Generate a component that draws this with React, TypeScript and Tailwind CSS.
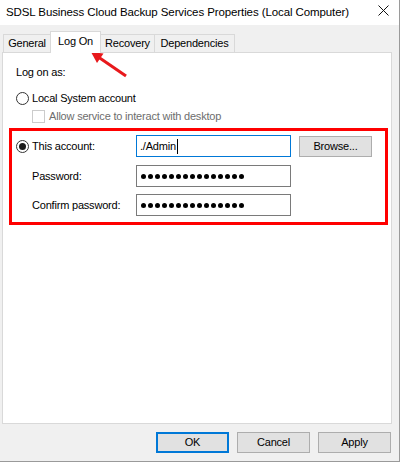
import React from 'react';

function Radio({ checked }: { checked?: boolean }) {
  return (
    <span className="flex h-[13px] w-[13px] shrink-0 items-center justify-center rounded-full border border-[#333333] bg-white">
      {checked && <span className="h-[7px] w-[7px] rounded-full bg-[#1a1a1a]" />}
    </span>
  );
}

function PasswordBox() {
  return (
    <div className="flex h-[22px] w-[155px] items-center gap-[2px] border border-[#7a7a7a] bg-white pl-[4px]">
      {Array.from({ length: 15 }).map((_, i) => (
        <span key={i} className="h-[5px] w-[5px] rounded-full bg-black" />
      ))}
    </div>
  );
}

function Tab({ label, className }: { label: string; className: string }) {
  return <div className={`flex items-center justify-center border-[#d9d9d9] ${className}`}>{label}</div>;
}

function WinButton({ label, focused }: { label: string; focused?: boolean }) {
  return (
    <button
      type="button"
      className={`flex h-[21px] w-[73px] items-center justify-center bg-[#e1e1e1] text-[11px] tracking-[-0.2px] text-black ${
        focused ? 'border-2 border-[#0078d7]' : 'border border-[#adadad]'
      }`}
    >
      {label}
    </button>
  );
}

export default function App() {
  return (
    <div className="relative h-[462px] w-[400px] overflow-hidden border-b border-r border-[#9a9a9a] bg-[#f0f0f0] font-['Liberation_Sans',Arial,sans-serif] text-[11px] tracking-[-0.2px] text-black">
      {/* title bar */}
      <div className="flex h-[25px] items-center justify-between bg-white pl-[6px] pr-[10px]">
        <span className="text-[11.5px] leading-none tracking-[-0.1px] text-black">
          SDSL Business Cloud Backup Services Properties (Local Computer)
        </span>
        <svg width="11" height="11" viewBox="0 0 11 11" className="mb-[4px]">
          <path d="M0.5 0.5L10.5 10.5M10.5 0.5L0.5 10.5" stroke="#111" strokeWidth="1" />
        </svg>
      </div>

      {/* tabs */}
      <div className="flex h-[27px] items-end pl-[3px]">
        <Tab label="General" className="h-[18px] w-[47px] border-l border-t" />
        <Tab label="Log On" className="relative z-10 -mb-px h-[22px] w-[51px] border-x border-t bg-white pb-[2px]" />
        <Tab label="Recovery" className="h-[18px] w-[54px] border-r border-t" />
        <Tab label="Dependencies" className="h-[18px] w-[80px] border-r border-t" />
      </div>

      {/* panel */}
      <div className="ml-[2px] flex h-[372px] w-[390px] flex-col border border-[#d9d9d9] bg-white">
        <div className="mt-[12px] pl-[13px] leading-[14px]">Log on as:</div>

        <div className="mt-[12px] flex h-[14px] items-center gap-[3px] pl-[13px]">
          <Radio />
          <span>Local System account</span>
        </div>

        <div className="mt-[5px] flex h-[13px] items-center gap-[4px] pl-[29px] text-[#6d6d6d]">
          <span className="h-[13px] w-[13px] border border-[#cccccc] bg-white" />
          <span>Allow service to interact with desktop</span>
        </div>

        <div className="ml-[6px] mt-[5px] flex h-[97px] w-[379px] flex-col border-[3px] border-[#ff0000]">
          <div className="mt-[4px] flex h-[22px] items-center">
            <div className="flex w-[124px] items-center gap-[3px] pl-[4px]">
              <Radio checked />
              <span>This account:</span>
            </div>
            <div className="flex h-[22px] w-[155px] items-center border border-[#0078d7] bg-white pl-[3px]">
              <span>./Admin</span>
              <span className="ml-px h-[15px] w-px bg-black" />
            </div>
            <div className="ml-[8px]">
              <WinButton label="Browse..." />
            </div>
          </div>

          <div className="mt-[8px] flex h-[22px] items-center">
            <span className="w-[124px] pl-[20px]">Password:</span>
            <PasswordBox />
          </div>

          <div className="mt-[7px] flex h-[22px] items-center">
            <span className="w-[124px] pl-[20px]">Confirm password:</span>
            <PasswordBox />
          </div>
        </div>
      </div>

      {/* bottom buttons */}
      <div className="mt-[8px] flex justify-end gap-[8px] pr-[8px]">
        <WinButton label="OK" focused />
        <WinButton label="Cancel" />
        <WinButton label="Apply" />
      </div>

      {/* annotation arrow */}
      <svg className="pointer-events-none absolute left-0 top-0" width="400" height="462">
        <line x1="126" y1="76" x2="99" y2="57.5" stroke="#e8191c" strokeWidth="3" />
        <polygon points="91,52 103.5,53.6 97,63" fill="#e8191c" />
      </svg>
    </div>
  );
}
